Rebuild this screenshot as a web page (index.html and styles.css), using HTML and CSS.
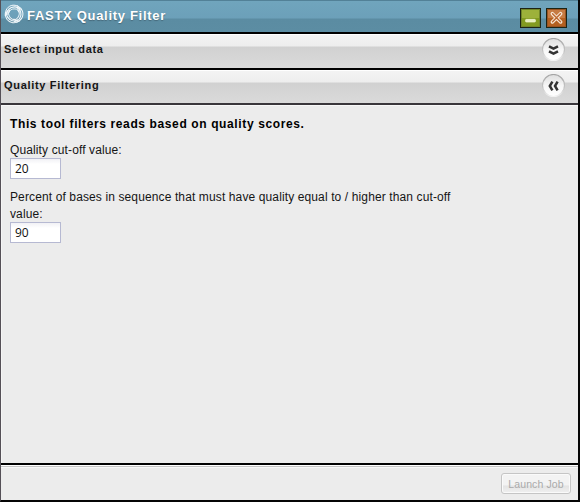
FILE: index.html
```html
<!DOCTYPE html>
<html lang="en">
<head>
<meta charset="utf-8">
<title>FASTX Quality Filter</title>
<link rel="stylesheet" href="styles.css">
</head>
<body>
<main class="window">
  <header class="titlebar">
    <svg class="logo" viewBox="0 0 20 20" aria-hidden="true">
      <g fill="none" stroke="#f2f8fb" stroke-linecap="round">
        <g id="blade"><path stroke-width="1" d="M1.2 11.5C.8 6 4 1.7 9 1.2c3-.2 5 .8 6.5 2.4"/><path stroke-width="1.1" d="M3.1 10.5C3 6.5 5.5 3 10.5 2.9c3 0 4.8 1.2 5.8 3"/><path stroke-width=".9" d="M5 8.5c.6-2.4 2.8-3.9 6-3.6 2.6.3 4 1.7 4.5 3.3"/></g>
        <use href="#blade" transform="rotate(120 10 10)"/>
        <use href="#blade" transform="rotate(240 10 10)"/>
      </g>
    </svg>
    <h1 class="title">FASTX Quality Filter</h1>
    <button class="control minimize" aria-label="Minimize"><svg viewBox="0 0 20 20"><rect x="4.5" y="11.5" width="11" height="3" rx="1" fill="#e7efbd" stroke="#f5f9d9" stroke-width=".7"/></svg></button>
    <button class="control close" aria-label="Close"><svg viewBox="0 0 20 20"><path d="M5.4 5.2l9.2 9.2M14.6 5.2l-9.2 9.2" stroke="#f7e7d5" stroke-width="4" stroke-linecap="round"/><path d="M5.6 5.4l8.8 8.8M14.4 5.4l-8.8 8.8" stroke="#bd6930" stroke-width="1.6" stroke-linecap="round"/></svg></button>
  </header>
  <section class="section-bar">
    <h2>Select input data</h2>
    <svg class="toggle" viewBox="0 0 24 24"><use href="#disc"/><path class="chevron" d="M7 8.3l4.5 2.4L16 8.3M7 13.3l4.5 2.4 4.5-2.4"/></svg>
  </section>
  <section class="section-bar">
    <h2>Quality Filtering</h2>
    <svg class="toggle" viewBox="0 0 24 24">
      <defs>
        <linearGradient id="shine" x2="0" y2="1"><stop stop-color="#dedede"/><stop offset=".5" stop-color="#f6f6f6"/><stop offset="1" stop-color="#fff"/></linearGradient>
        <linearGradient id="rim" x2="0" y2="1"><stop stop-color="#a5a5a5"/><stop offset=".6" stop-color="#c5c5c5"/><stop offset="1" stop-color="#f2f2f2"/></linearGradient>
        <circle id="disc" cx="11.5" cy="11.5" r="11" fill="url(#shine)" stroke="url(#rim)" stroke-width="1.2"/>
      </defs>
      <use href="#disc"/><path class="chevron" d="M10.4 7.6L7.8 12l2.6 4.4M15.6 7.6L13 12l2.6 4.4"/>
    </svg>
  </section>
  <form class="content">
    <p class="intro">This tool filters reads based on quality scores.</p>
    <label class="cutoff" for="quality">Quality cut-off value:</label>
    <input id="quality" value="20">
    <label class="percent" for="percent">Percent of bases in sequence that must have quality equal to / higher than cut-off<br>value:</label>
    <input id="percent" value="90">
  </form>
  <footer class="footer"><button class="launch" disabled>Launch Job</button></footer>
</main>
</body>
</html>
```
FILE: styles.css
```css
* { box-sizing: border-box; }
body { margin: 0; font-family: "Liberation Sans", Arial, sans-serif; color: #151515; }
.window {
  width: 580px;
  height: 502px;
  display: flex;
  flex-direction: column;
  border: solid #050505;
  border-width: 0 2px 2px 1px;
  border-left-color: #555057;
  background: #ececec;
}
.titlebar {
  height: 34px;
  flex: none;
  display: flex;
  align-items: flex-start;
  padding: 4px 11px 0 3px;
  border-top: 1px solid #528197;
  border-bottom: 2px solid #000;
  background: linear-gradient(#70a5bd 0, #6ca0b9 17px, #5b8ca2 18px, #5c8da3 100%);
}
.logo { width: 20px; height: 20px; margin-top: -1px; }
.title {
  flex: 1;
  margin: 3px 0 0 3px;
  font-size: 13px;
  line-height: 16px;
  letter-spacing: .7px;
  color: #fff;
  text-shadow: 0 1px 1px #46697a;
}
.control {
  width: 21px;
  height: 20px;
  margin: 3px 0 0 5px;
  padding: 0;
  border: 1px solid #1d2414;
}
.control svg { display: block; width: 19px; height: 18px; }
.minimize { background: linear-gradient(#9db13a 50%, #839b20 50%); box-shadow: inset 0 0 0 1px #718628; }
.close { background: linear-gradient(#c67b42 50%, #b4601f 50%); box-shadow: inset 0 0 0 1px #985321; }
.section-bar {
  height: 36px;
  flex: none;
  display: flex;
  justify-content: space-between;
  align-items: flex-start;
  padding: 3px 12px 0 3px;
  border-top: 1px solid #fff;
  border-bottom: 2px solid #000;
  background: linear-gradient(#f3f3f3 0, #eee 11px, #d1d1d1 12px, #dadada 100%);
}
.section-bar + .section-bar { height: 35px; border-bottom-color: #39363b; }
.section-bar h2 { margin: 4px 0 0; font-size: 11px; line-height: 15px; letter-spacing: .68px; }
.toggle { width: 24px; height: 24px; }
.chevron { fill: none; stroke: #333; stroke-width: 2.5; }
.content {
  flex: 1;
  display: flex;
  flex-direction: column;
  align-items: flex-start;
  padding: 10px 8px 0;
  border-top: 1px solid #f8f8f8;
  border-left: 1px solid #f5f5f5;
  font-size: 12px;
  line-height: 17px;
  letter-spacing: .12px;
}
.intro { margin: 0; font-size: 12px; font-weight: bold; letter-spacing: .62px; line-height: 17px; color: #000; }
.cutoff { margin-top: 9px; line-height: 16px; }
.percent { margin-top: 10px; line-height: 16.5px; }
.content input {
  width: 51px;
  height: 21px;
  padding: 0 4px;
  border: 1px solid #b6b9d2;
  background: linear-gradient(#f1f1f5, #fff 5px);
  font: 12px "Open Sans", sans-serif;
  letter-spacing: 0;
  color: #111;
}
.footer {
  height: 37px;
  flex: none;
  display: flex;
  justify-content: flex-end;
  padding: 8px 7px 0 0;
  border-top: 2px solid #000;
  box-shadow: inset 0 1px #fff, inset 0 2px #c5c5c5, inset 0 3px #f7f7f7;
}
.launch {
  width: 70px;
  height: 21px;
  padding: 0;
  border: 1px solid #c5c5c5;
  border-radius: 3px;
  background: linear-gradient(#f3f3f3 60%, #e3e3e3 61%, #f0f0f0);
  box-shadow: inset 0 0 0 1px #fafafa;
  font: 10.5px "Liberation Sans", Arial, sans-serif;
  letter-spacing: .1px;
  color: #aaa;
}
```
